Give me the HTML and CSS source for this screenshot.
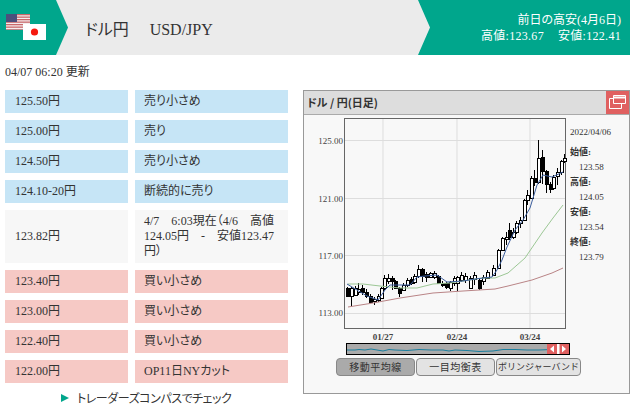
FILE: index.html
```html
<!DOCTYPE html>
<html lang="ja">
<head>
    <meta charset="UTF-8">
    <meta name="viewport" content="width=device-width, initial-scale=1.0">
    <title>ドル円 USD/JPY</title>
    <link rel="stylesheet" href="styles.css">
</head>
<body>
    <div class="header">
        <div class="flags">
            <svg class="flag-us" width="24" height="16" viewBox="0 0 24 16">
                <rect width="24" height="16" fill="#f4eeee"/>
                <rect y="0" width="24" height="1.3" fill="#c9686a"/>
                <rect y="2.5" width="24" height="1.3" fill="#c9686a"/>
                <rect y="5" width="24" height="1.3" fill="#c9686a"/>
                <rect y="7.5" width="24" height="1.3" fill="#c9686a"/>
                <rect y="10" width="24" height="1.3" fill="#c9686a"/>
                <rect y="12.5" width="24" height="1.3" fill="#c9686a"/>
                <rect y="15" width="24" height="1" fill="#b98a8c"/>
                <rect width="11" height="8" fill="#4c4f7c"/>
            </svg>
            <svg class="flag-jp" width="23" height="16" viewBox="0 0 23 16">
                <rect width="23" height="16" fill="#fff"/>
                <circle cx="11.5" cy="8" r="3.6" fill="#f5190f"/>
            </svg>
        </div>
        <div class="pair">ドル円<span class="pair-code">USD/JPY</span></div>
        <div class="prev-day">
            <div>前日の高安(4月6日)</div>
            <div class="prev-values">高値:123.67<span class="prev-gap">安値:122.41</span></div>
        </div>
    </div>

    <div class="updated">04/07 06:20 更新</div>

    <div class="main">
        <div class="orders">
            <div class="order-grid">
                <div class="cell sell">125.50円</div>
                <div class="cell sell note">売り小さめ</div>
                <div class="cell sell">125.00円</div>
                <div class="cell sell note">売り</div>
                <div class="cell sell">124.50円</div>
                <div class="cell sell note">売り小さめ</div>
                <div class="cell sell">124.10-20円</div>
                <div class="cell sell note">断続的に売り</div>
                <div class="cell now">123.82円</div>
                <div class="cell now note">4/7　6:03現在（4/6　高値124.05円　-　安値123.47円）</div>
                <div class="cell buy">123.40円</div>
                <div class="cell buy note">買い小さめ</div>
                <div class="cell buy">123.00円</div>
                <div class="cell buy note">買い小さめ</div>
                <div class="cell buy">122.40円</div>
                <div class="cell buy note">買い小さめ</div>
                <div class="cell buy">122.00円</div>
                <div class="cell buy note">OP11日NYカット</div>
            </div>
            <div class="compass"><span class="arrow"></span>トレーダーズコンパスでチェック</div>
        </div>

        <div class="panel">
            <div class="panel-title">
                <span>ドル / 円(日足)</span>
                <div class="popup-btn">
                    <svg width="23" height="22" viewBox="0 0 23 22" fill="none" stroke="#fff" stroke-width="1">
                        <path d="M7.5 4.5h12v8h-12z"/>
                        <path d="M7.5 7.5h-4v10h12v-5"/>
                        <path d="M7.5 6.5h12" stroke-width="2"/>
                    </svg>
                </div>
            </div>
            <div class="chart-row">
                <svg id="chart" class="chart" width="266" height="228" viewBox="304 115 266 228">
                    <g class="grid">
                        <path d="M383 119V329M457 119V329M530 119V329"/>
                        <path d="M345 140.500H566M345 198.500H566M345 255.500H566M345 313.500H566"/>
                    </g>
                    <rect class="frame" x="344.500" y="118.500" width="221" height="210"/>
                    <g class="axis-y">
                        <text x="343" y="144">125.00</text>
                        <text x="343" y="202">121.00</text>
                        <text x="343" y="259">117.00</text>
                        <text x="343" y="316">113.00</text>
                    </g>
                    <g class="axis-x">
                        <text x="383" y="340">01/27</text>
                        <text x="457" y="340">02/24</text>
                        <text x="530" y="340">03/24</text>
                    </g>
                </svg>
                <div class="ohlc">
                    <div class="ohlc-date">2022/04/06</div>
                    <div class="ohlc-label">始値:</div>
                    <div class="ohlc-value">123.58</div>
                    <div class="ohlc-label">高値:</div>
                    <div class="ohlc-value">124.05</div>
                    <div class="ohlc-label">安値:</div>
                    <div class="ohlc-value">123.54</div>
                    <div class="ohlc-label">終値:</div>
                    <div class="ohlc-value">123.79</div>
                </div>
            </div>
            <div class="range">
                <svg width="222" height="10" viewBox="0 0 222 10">
                    <path class="range-line" d="M0 6H8L12 5.500L18 6L24 5L30 6L36 7L42 5.500L48 6L60 6.500L72 5.500L84 6L96 6L102 7L108 6L120 6.500L132 7.500L146 7L156 5.500L168 5.500L180 6L192 6L204 5.500L216 4L222 4"/>
                    <rect class="range-pick" x="200" width="22" height="10"/>
                    <rect class="range-mark" x="210" width="2.500" height="10"/>
                    <path class="range-mark" d="M207 1.500L203 5L207 8.500zM215 1.500L219 5L215 8.500z"/>
                </svg>
            </div>
            <div class="tabs">
                <div class="tab tab-on">移動平均線</div>
                <div class="tab">一目均衡表</div>
                <div class="tab tab-small">ボリンジャーバンド</div>
            </div>
        </div>
    </div>

    <script src="chart.js"></script>
</body>
</html>
```

FILE: styles.css
```css
body {
    font-family: "Liberation Serif", "Noto Sans CJK JP", serif;
    font-size: 12px;
    font-feature-settings: "palt";
    color: #333;
    background-color: #fff;
    margin: 0;
    overflow: hidden;
}

.header {
    display: flex;
    align-items: center;
    height: 55px;
    background: #ebebeb;
}

.flags {
    position: relative;
    width: 68px;
    height: 55px;
    background: #00a68c;
    clip-path: polygon(0 0, 56px 0, 68px 50%, 56px 100%, 0 100%);
}

.flag-us {
    position: absolute;
    left: 6px;
    top: 14px;
}

.flag-jp {
    position: absolute;
    left: 23px;
    top: 24px;
}

.pair {
    flex: 1;
    padding-left: 17px;
    font-size: 16px;
}

.pair-code {
    margin-left: 21px;
}

.prev-day {
    width: 212px;
    height: 55px;
    box-sizing: border-box;
    padding: 12px 9px 0 0;
    background: #00a68c;
    color: #fff;
    text-align: right;
    line-height: 16px;
    clip-path: polygon(0 0, 100% 0, 100% 100%, 0 100%, 12px 50%);
}

.prev-values {
    letter-spacing: 0.3px;
}

.prev-gap {
    margin-left: 14px;
}

.updated {
    height: 35px;
    padding-left: 5px;
    line-height: 35px;
}

.main {
    display: flex;
    align-items: flex-start;
}

.orders {
    width: 303px;
}

.order-grid {
    display: grid;
    grid-template-columns: 123px 153px;
    gap: 7px;
    margin-left: 5px;
}

.cell {
    display: flex;
    align-items: center;
    min-height: 23px;
    padding-left: 10px;
    box-sizing: border-box;
    line-height: 15px;
}

.note {
    padding: 0 9px;
}

.sell {
    background: #c6e5f6;
}

.now {
    background: #f7f7f7;
    height: 53px;
}

.buy {
    background: #f6c9c5;
}

.compass {
    display: flex;
    align-items: center;
    height: 15px;
    padding: 7px 0 0 61px;
    letter-spacing: -0.45px;
}

.arrow {
    width: 0;
    height: 0;
    margin-right: 8px;
    border-left: 8px solid #00a68c;
    border-top: 4px solid transparent;
    border-bottom: 4px solid transparent;
}

.panel {
    width: 325px;
    height: 302px;
    background: #f8f8f8;
    border: 1px solid #999;
}

.panel-title {
    display: flex;
    justify-content: space-between;
    height: 23px;
    padding-left: 3px;
    background: #ddd;
    border-bottom: 1px solid #aaa;
    font-family: "Noto Sans CJK JP", sans-serif;
    font-size: 11px;
    font-weight: bold;
    line-height: 23px;
}

.popup-btn {
    width: 23px;
    height: 23px;
    background: #e06060;
}

.chart-row {
    display: flex;
}

.chart {
    display: block;
}

.grid path {
    fill: none;
    stroke: #ddd;
}

.frame {
    fill: none;
    stroke: #666;
}

.axis-y text,
.axis-x text {
    font-size: 9px;
    fill: #444;
}

.axis-y text {
    text-anchor: end;
}

.axis-x text {
    text-anchor: middle;
    font-weight: bold;
}

.ma {
    fill: none;
}

.ma-short {
    stroke: #3d5f9e;
}

.ma-mid {
    stroke: #9cc795;
}

.ma-long {
    stroke: #b98486;
}

.candle {
    stroke: #000;
    shape-rendering: crispEdges;
}

.ohlc {
    padding-top: 10px;
    font-size: 9px;
    line-height: 15px;
}

.ohlc-date {
    margin-bottom: 5px;
}

.ohlc-label {
    font-weight: bold;
}

.ohlc-value {
    padding-left: 9px;
}

.range {
    width: 222px;
    height: 10px;
    margin-left: 42px;
    background: #aaa;
    border: 1px solid #000;
}

.range svg {
    display: block;
}

.range-line {
    fill: none;
    stroke: #1a7f9f;
}

.range-pick {
    fill: #e06060;
}

.range-mark {
    fill: #fff;
}

.tabs {
    display: flex;
    gap: 1px;
    margin: 3px 0 0 32px;
}

.tab {
    width: 77px;
    height: 16px;
    background: #e3e3e3;
    border: 1px solid #888;
    border-radius: 4px;
    font-family: "Noto Sans CJK JP", sans-serif;
    font-size: 10px;
    font-feature-settings: normal;
    letter-spacing: 0.5px;
    line-height: 16px;
    text-align: center;
}

.tab-on {
    background: #aaa;
}

.tab-small {
    width: 83px;
    font-size: 9px;
    letter-spacing: 0;
}
```

FILE: chart.js
```js
// candles in chart pixels: x, high, body top, body bottom, low, black?
const candles = [
    [347, 287, 288, 296, 297, 1], [351, 287, 288, 296, 306, 0], [355, 286, 288, 295, 296, 0],
    [358, 283, 289, 292, 295, 0], [362, 285, 288, 292, 295, 1], [366, 289, 292, 296, 298, 1],
    [370, 294, 296, 302, 303, 1], [374, 297, 299, 301, 305, 0], [378, 294, 296, 300, 302, 0],
    [381, 287, 288, 298, 299, 0], [384, 275, 278, 288, 290, 0], [388, 274, 278, 281, 284, 0],
    [392, 276, 278, 281, 290, 1], [395, 280, 281, 288, 289, 1], [399, 287, 288, 293, 297, 1],
    [403, 283, 285, 290, 291, 0], [407, 278, 280, 285, 287, 0], [411, 277, 279, 283, 285, 1],
    [414, 274, 276, 282, 284, 0], [418, 265, 269, 276, 278, 0], [422, 268, 269, 276, 282, 1],
    [426, 272, 274, 277, 282, 1], [430, 272, 273, 277, 278, 0], [434, 271, 273, 277, 279, 0],
    [438, 275, 276, 283, 284, 1], [442, 281, 283, 285, 287, 1], [446, 282, 283, 287, 289, 1],
    [450, 281, 282, 288, 291, 0], [454, 276, 278, 283, 286, 0], [457, 276, 277, 283, 291, 0],
    [461, 272, 275, 280, 282, 0], [465, 273, 276, 280, 283, 0], [470, 276, 278, 288, 289, 0],
    [474, 272, 275, 279, 285, 0], [479, 278, 280, 288, 290, 1], [483, 275, 277, 281, 285, 0],
    [487, 270, 272, 278, 279, 0], [493, 265, 268, 275, 276, 0], [498, 249, 250, 268, 269, 0],
    [502, 237, 238, 250, 251, 0], [506, 232, 237, 239, 245, 0], [509, 223, 230, 237, 240, 1],
    [513, 228, 232, 237, 239, 0], [516, 221, 223, 232, 234, 0], [520, 217, 220, 223, 228, 0],
    [524, 199, 200, 220, 221, 0], [527, 190, 195, 200, 205, 0], [531, 176, 178, 198, 199, 0],
    [534, 170, 178, 182, 186, 1], [538, 140, 158, 182, 184, 0], [542, 150, 157, 171, 184, 1],
    [546, 170, 171, 184, 193, 1], [550, 182, 184, 189, 193, 1], [553, 175, 177, 188, 190, 0],
    [557, 168, 172, 176, 185, 0], [561, 160, 161, 172, 175, 0], [564, 154, 158, 161, 163, 0]
];

const averages = {
    'ma-long': '348,307 373,303 400,298 433,293 463,291 495,289 508,286 532,280 552,273 563,268',
    'ma-mid': '348,284 363,284 380,286 400,288 417,288 433,284 450,283 463,281 482,278 495,278 508,273 525,258 542,233 553,218 563,205',
    'ma-short': '347,284 357,290 367,296 378,300 385,290 390,285 400,285 410,285 417,277 425,276 437,275 447,282 463,281 475,279 492,277 497,270 502,260 507,247 515,230 523,220 530,208 537,185 543,175 552,177 563,172'
};

const chart = document.getElementById('chart');

function addSvg(name, attrs) {
    const node = document.createElementNS('http://www.w3.org/2000/svg', name);
    Object.keys(attrs).forEach(key => node.setAttribute(key, attrs[key]));
    chart.appendChild(node);
}

candles.forEach(([x, high, top, bottom, low, black]) => {
    addSvg('path', { class: 'candle', d: `M${x + 0.5} ${high}V${low}` });
    addSvg('rect', {
        class: 'candle',
        x: x - 1,
        y: top + 0.5,
        width: 3,
        height: bottom - top,
        fill: black ? '#000' : '#fff'
    });
});

Object.keys(averages).forEach(name => {
    addSvg('polyline', { class: 'ma ' + name, points: averages[name] });
});
```
